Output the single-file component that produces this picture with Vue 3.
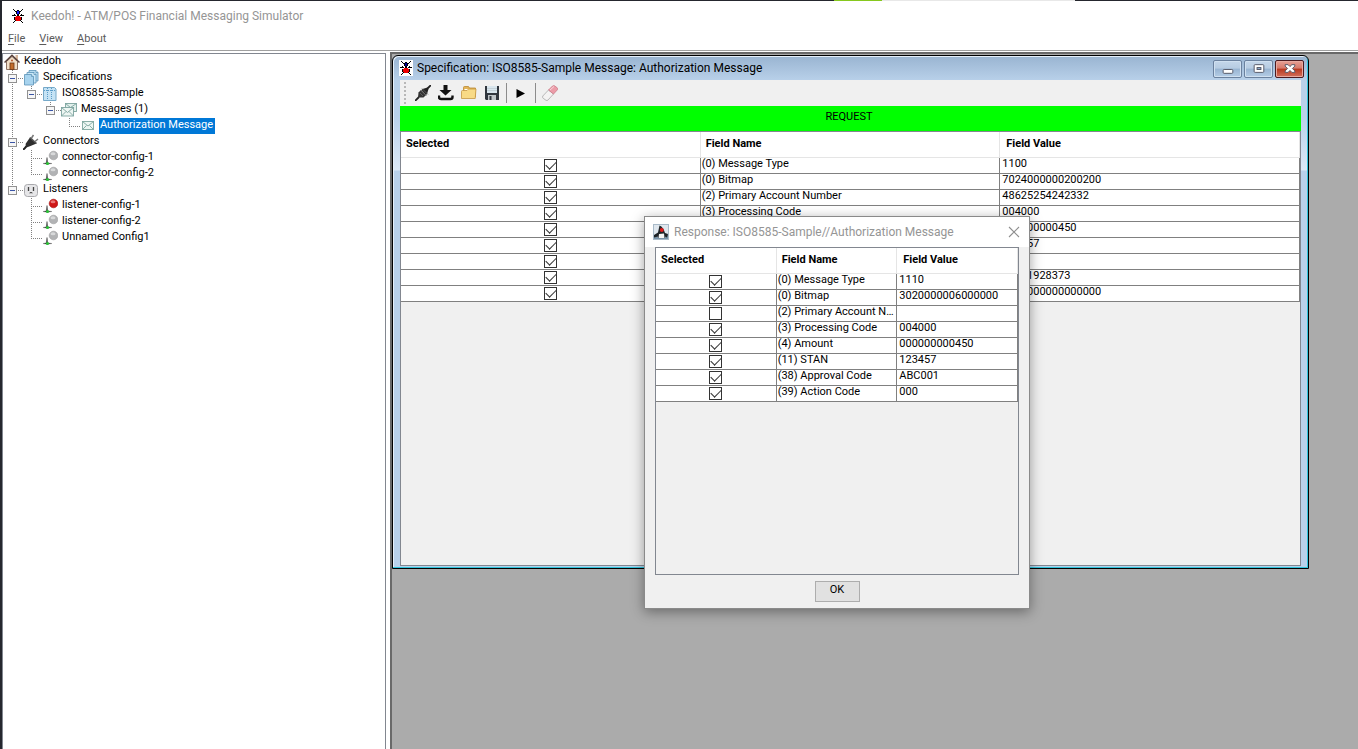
<script setup>
import { ref } from 'vue'

const menus = ['File', 'View', 'About']

const tree = [
  { label: 'Keedoh', icon: 'home', guides: [] },
  { label: 'Specifications', icon: 'specs', guides: ['tee'], open: true },
  { label: 'ISO8585-Sample', icon: 'spec', guides: ['bar', 'end'], open: true },
  { label: 'Messages (1)', icon: 'mails', guides: ['bar', 'blank', 'end'], open: true },
  { label: 'Authorization Message', icon: 'mail', guides: ['bar', 'blank', 'blank', 'end'], selected: true },
  { label: 'Connectors', icon: 'plug', guides: ['tee'], open: true },
  { label: 'connector-config-1', icon: 'idle', guides: ['bar', 'tee'] },
  { label: 'connector-config-2', icon: 'idle', guides: ['bar', 'end'] },
  { label: 'Listeners', icon: 'socket', guides: ['end'], open: true },
  { label: 'listener-config-1', icon: 'active', guides: ['blank', 'tee'] },
  { label: 'listener-config-2', icon: 'idle', guides: ['blank', 'tee'] },
  { label: 'Unnamed Config1', icon: 'idle', guides: ['blank', 'end'] }
]

const requestRows = ref([
  { name: '(0) Message Type', value: '1100', on: true },
  { name: '(0) Bitmap', value: '7024000000200200', on: true },
  { name: '(2) Primary Account Number', value: '48625254242332', on: true },
  { name: '(3) Processing Code', value: '004000', on: true },
  { name: '(4) Amount', value: '000000000450', on: true },
  { name: '(11) STAN', value: '123457', on: true },
  { name: '(22) POS Entry Mode', value: '', on: true },
  { name: '(41) Terminal ID', value: '00001928373', on: true },
  { name: '(52) PIN Data', value: '0000000000000000', on: true }
])

const responseRows = ref([
  { name: '(0) Message Type', value: '1110', on: true },
  { name: '(0) Bitmap', value: '3020000006000000', on: true },
  { name: '(2) Primary Account Number', value: '', on: false },
  { name: '(3) Processing Code', value: '004000', on: true },
  { name: '(4) Amount', value: '000000000450', on: true },
  { name: '(11) STAN', value: '123457', on: true },
  { name: '(38) Approval Code', value: 'ABC001', on: true },
  { name: '(39) Action Code', value: '000', on: true }
])
</script>

<template>
  <div class="screen">
    <div class="backdrop"><span class="backdrop-green"></span><span class="backdrop-light"></span></div>
    <div class="app">
      <header class="titlebar">
        <svg class="bug" viewBox="0 0 16 16" shape-rendering="crispEdges">
          <path d="M3 1h1v1h1v1h1v1h-1v-1h-1v-1h-1zM12 1h1v1h-1v1h-1v1h-1v-1h1v-1h1zM2 7h2v-1h1v1h1v1h-4zM14 7h-2v-1h-1v1h-1v1h4zM7 2h2v1h1v3h-1v2h-2v-2h-1v-3h1zM3 14h1v-1h1v-1h1v1h-1v1h-1v1h-1zM13 14h-1v-1h-1v-1h-1v1h1v1h1v1h1zM4 9h1v3h-1zM11 9h1v3h-1z" fill="#000" />
          <path d="M7 3h2v3h-2z" fill="#1414ff" />
          <path d="M6 8h4v1h1v3h-1v1h-4v-1h-1v-3h1z" fill="#f00000" />
        </svg>
        <h1>Keedoh! - ATM/POS Financial Messaging Simulator</h1>
      </header>
      <nav class="menubar">
        <button v-for="m in menus" :key="m" type="button"><u>{{ m[0] }}</u>{{ m.slice(1) }}</button>
      </nav>
      <div class="body">
        <aside class="tree-panel">
          <ul class="tree">
            <li v-for="n in tree" :key="n.label">
              <svg v-for="(g, i) in n.guides" :key="i" class="guide" viewBox="0 0 19 16" shape-rendering="crispEdges">
                <path v-if="g === 'bar' || g === 'tee'" d="M8.5 0V16" class="dots" />
                <path v-if="g === 'end'" d="M8.5 0V8" class="dots" />
                <path v-if="g === 'tee' || g === 'end'" d="M8 8.5H19" class="dots" />
                <g v-if="n.open && i === n.guides.length - 1">
                  <rect x="4.500" y="4.500" width="8" height="8" fill="#f6f6f6" stroke="#919191" />
                  <path d="M6 8.500H11" stroke="#3a55a5" />
                </g>
              </svg>
              <svg class="node-icon" viewBox="0 0 16 16">
                <g v-if="n.icon === 'home'">
                  <path d="M11.500 1H14v5h-2.500z" fill="#d8b79b" />
                  <path d="M2.500 7.500L8 2.500l5.500 5V15.500h-11z" fill="#f1dfc8" stroke="#8d7262" />
                  <path d="M.5 8.500L8 1.200l7.500 7.300" fill="none" stroke="#57403a" stroke-width="1.500" />
                  <rect x="6" y="9" width="4" height="6.500" fill="#c26d2c" stroke="#6b3512" stroke-width=".8" />
                  <circle cx="8" cy="6.500" r="1" fill="#b4562b" />
                </g>
                <g v-else-if="n.icon === 'specs'" stroke="#5a93b8" stroke-width=".8">
                  <path d="M6 .5h7l2 2v8.500H6z" fill="#b8ddf2" />
                  <path d="M4 2.500h7l2 2v8.500H4z" fill="#c9e7f7" />
                  <path d="M1.500 4.500h7l2 2v8.500h-9z" fill="#a7d3ee" />
                  <path d="M8.500 4.500v2h2M11 2.500v2h2M13 .5v2h2" fill="#edf8fd" />
                </g>
                <g v-else-if="n.icon === 'spec'">
                  <path d="M1.500 1.500h11l1.500 1.500v11.500H1.500z" fill="#c5e3f5" stroke="#76a9c9" />
                  <path d="M5.500 2v12M9.500 2v12M2 4.500h12" stroke="#5b9cc8" stroke-dasharray="1 1" />
                </g>
                <g v-else-if="n.icon === 'mails'" stroke="#7da49f" stroke-width=".9">
                  <rect x="4.500" y="1.500" width="11" height="8" fill="#e2f0ec" />
                  <rect x=".5" y="5.500" width="12" height="8.500" fill="#eef6f3" />
                  <path d="M.5 5.500l6 5 6-5M.5 14l4.500-4.500M12.500 14L8 9.500M4.500 1.500l5 4 6-4" fill="none" />
                </g>
                <g v-else-if="n.icon === 'mail'" stroke="#7fa79f" stroke-width=".9">
                  <rect x="2.500" y="3.500" width="11" height="8" fill="#edf6f3" />
                  <path d="M2.500 3.500l5.500 4.500 5.500-4.500M2.500 11.500l4-4M13.500 11.500l-4-4" fill="none" />
                </g>
                <g v-else-if="n.icon === 'plug'">
                  <path d="M0 15.500C2 15 2.500 13 4 11.500" fill="none" stroke="#222" stroke-width="2" />
                  <path d="M2.500 10L7 3.500l6.500 6-6 2.500-4 1.500z" fill="#2e2e2e" />
                  <path d="M7 3.500l6.500 6" stroke="#555" stroke-width="1.500" />
                  <path d="M8.500 4L10.500 1M12 7.500l3-2.500" stroke="#777" stroke-width="1.500" />
                </g>
                <g v-else-if="n.icon === 'socket'">
                  <rect x="1.500" y="2.500" width="13" height="12" rx="3" fill="#e6e6e8" stroke="#a9a9ad" />
                  <path d="M5.500 5v4M10.500 5v4" stroke="#444" stroke-width="1.300" />
                  <path d="M7 11.500v-1h2v1" fill="none" stroke="#555" />
                </g>
                <g v-else>
                  <path d="M5 7.500l.8 6h-1.600z" fill="#333" stroke="#444" stroke-width=".5" />
                  <path d="M1 13.500l4-.7 5 .7-5 .7z" fill="#333" stroke="#444" stroke-width=".3" />
                  <circle cx="5.500" cy="13.500" r="1.600" fill="#29c236" />
                  <circle cx="11.500" cy="5.500" r="4.300" :fill="n.icon === 'active' ? '#cf1717' : '#b2b3b5'" :stroke="n.icon === 'active' ? '#a51111' : '#9d9ea0'" stroke-width=".6" />
                  <ellipse cx="11" cy="3.700" rx="2.500" ry="1.500" :fill="n.icon === 'active' ? '#ea7777' : '#d8d9da'" />
                </g>
              </svg>
              <span class="node-label" :class="{ selected: n.selected }">{{ n.label }}</span>
            </li>
          </ul>
        </aside>
        <main class="desktop">
          <section class="frame">
            <header class="frame-title">
              <svg class="bug frame-bug" viewBox="1 0 14 16" shape-rendering="crispEdges">
                <path d="M3 1h1v1h1v1h1v1h-1v-1h-1v-1h-1zM12 1h1v1h-1v1h-1v1h-1v-1h1v-1h1zM2 7h2v-1h1v1h1v1h-4zM14 7h-2v-1h-1v1h-1v1h4zM7 2h2v1h1v3h-1v2h-2v-2h-1v-3h1zM3 14h1v-1h1v-1h1v1h-1v1h-1v1h-1zM13 14h-1v-1h-1v-1h-1v1h1v1h1v1h1zM4 9h1v3h-1zM11 9h1v3h-1z" fill="#000" />
                <path d="M7 3h2v3h-2z" fill="#00008b" />
                <path d="M6 8h4v1h1v3h-1v1h-4v-1h-1v-3h1z" fill="#f00000" />
              </svg>
              <h2>Specification: ISO8585-Sample Message: Authorization Message</h2>
              <div class="frame-buttons">
                <button type="button" aria-label="Minimize"><svg viewBox="0 0 28 16"><rect x="9.500" y="8.500" width="10" height="4" rx="1" fill="#fff" stroke="#535666" /></svg></button>
                <button type="button" aria-label="Maximize"><svg viewBox="0 0 28 16"><rect x="9.500" y="3.500" width="10" height="8" rx="1" fill="#fff" stroke="#535666" /><rect x="12.500" y="6.500" width="4" height="2" fill="#8fb0d0" stroke="#535666" /></svg></button>
                <button type="button" class="close" aria-label="Close"><svg viewBox="0 0 28 16"><path d="M9.500 3.500h3l2 2 2-2h3v1.500l-2.500 2.500 2.500 2.500v1.500h-3l-2-2-2 2h-3v-1.500l2.500-2.500-2.500-2.500z" fill="#fff" stroke="#535666" /></svg></button>
              </div>
            </header>
            <div class="frame-content">
              <div class="toolbar">
                <span class="grip"></span>
                <button type="button" aria-label="Connect"><svg viewBox="0 0 16 16"><path d="M0 16l4-4M12 4l4-4" stroke="#222" stroke-width="1.800" /><path d="M3 12.500l.5-5L6 5l5 5-2.500 2.500z" fill="#333" /><path d="M6.500 5l1-1 5-1.500L13.500 4 12 9l-1 1z" fill="#222" /><path d="M5.500 5l6 6M7 3.500l6 6M5 8l3 3" stroke="#666" stroke-width=".8" /></svg></button>
                <button type="button" aria-label="Import"><svg viewBox="0 0 16 16"><path d="M5.500 0h4v5h4L7.500 10.500 1.500 5h4z" fill="#111" /><path d="M1 10.500v1.500q0 2 2 2h9.500q2 0 2-2v-1.500" fill="none" stroke="#111" stroke-width="2.400" /></svg></button>
                <button type="button" aria-label="Open"><svg viewBox="0 0 16 16"><path d="M2.500 12V2.500q0-1 1-1h4l1 1.500h6V12z" fill="#e2b458" stroke="#b98832" stroke-width=".8" /><path d="M3.500 4h10v7h-10z" fill="#fff" /><path d="M.5 13.500V6.500q0-1 1-1h4.500l1.500-1.500h7.500l-.8 9.500z" fill="#f8da86" stroke="#c59742" stroke-width=".8" /></svg></button>
                <button type="button" aria-label="Save"><svg viewBox="0 0 16 16"><path d="M1 1h14v14H2l-1-1z" fill="#30363e" /><rect x="3" y="1" width="10" height="7" fill="#d9e6ee" /><path d="M3 3.500h10M3 5.500h10" stroke="#b4c2cb" stroke-width=".6" /><rect x="4" y="10" width="8" height="5" fill="#bfc5c9" /><rect x="5.500" y="11" width="2" height="4" fill="#30363e" /></svg></button>
                <span class="divider"></span>
                <button type="button" aria-label="Send"><svg viewBox="0 0 16 16"><path d="M3.500 4l8.500 4.500L3.500 13z" fill="#000" /></svg></button>
                <span class="divider"></span>
                <button type="button" aria-label="Clear"><svg viewBox="0 0 16 16"><path d="M.8 11L6.500 5l5 4-5.500 6q-1 1-2 .3l-2.800-2q-1.200-1-.4-2.300z" fill="#f4f3f3" stroke="#aaa" stroke-width=".8" /><path d="M6.500 5l4-4q1-.8 2-.2l2.700 2q.9 1 .2 2L11.500 9z" fill="#ec9ca8" stroke="#cb7c8a" stroke-width=".8" /><path d="M8 5l4-3.500" stroke="#fbd5da" /></svg></button>
              </div>
              <div class="banner">REQUEST</div>
              <div class="grid-pane">
                <table>
                  <thead><tr><th>Selected</th><th>Field Name</th><th>Field Value</th></tr></thead>
                  <tbody>
                    <tr v-for="r in requestRows" :key="r.name">
                      <td class="tick"><input v-model="r.on" type="checkbox" :aria-label="r.name" /></td>
                      <td>{{ r.name }}</td>
                      <td>{{ r.value }}</td>
                    </tr>
                  </tbody>
                </table>
              </div>
            </div>
          </section>

          <section class="dialog" role="dialog" aria-labelledby="response-title">
            <header class="dialog-title">
              <svg class="duke" viewBox="0 0 16 16">
                <rect x=".5" y=".5" width="15" height="15" fill="#dfe7ee" stroke="#a9bac8" />
                <path d="M1 11h14v4H1z" fill="#7894a9" />
                <path d="M6.500 1.500q4 1.500 5.500 7.500l3 1-1 3.500-2-1v1.500H5v-1.500L1 13.500V11l4-2.500z" fill="#1f2428" />
                <path d="M6 10l5-.5.5 4.500H5.500z" fill="#f5f5f5" />
                <circle cx="8.800" cy="6" r="2" fill="#e01b1b" />
              </svg>
              <h2 id="response-title">Response: ISO8585-Sample//Authorization Message</h2>
              <button type="button" aria-label="Close dialog"><svg viewBox="0 0 12 12"><path d="M1 1l10 10M11 1L1 11" stroke="#8f8f8f" stroke-width="1.100" /></svg></button>
            </header>
            <div class="dialog-body">
              <div class="grid-pane">
                <table>
                  <thead><tr><th>Selected</th><th>Field Name</th><th>Field Value</th></tr></thead>
                  <tbody>
                    <tr v-for="r in responseRows" :key="r.name">
                      <td class="tick"><input v-model="r.on" type="checkbox" :aria-label="r.name" /></td>
                      <td>{{ r.name }}</td>
                      <td>{{ r.value }}</td>
                    </tr>
                  </tbody>
                </table>
              </div>
              <button type="button" class="ok">OK</button>
            </div>
          </section>
        </main>
      </div>
    </div>
  </div>
</template>

<style>
body { margin: 0; background: #fff; }
</style>

<style scoped>
* { box-sizing: border-box; }
.screen {
  height: 100vh;
  display: flex;
  flex-direction: column;
  overflow: hidden;
  background: #25272e;
  font-family: Roboto, "Open Sans", sans-serif;
  font-size: 11px;
  line-height: 12px;
  color: #000;
}
button { font: inherit; color: inherit; padding: 0; border: 0; background: none; }
h1, h2 { margin: 0; font-size: 12px; font-weight: 400; line-height: 16px; white-space: nowrap; }
svg { display: block; flex: none; }

.backdrop { height: 1px; display: flex; justify-content: flex-end; }
.backdrop-green { width: 48px; background: #86c81e; }
.backdrop-light { width: 193px; margin-right: 283px; background: #e8e8e8; }
.app { flex: 1; min-height: 0; margin-left: 2px; display: flex; flex-direction: column; background: #fff; }

.titlebar { height: 29px; display: flex; align-items: center; gap: 5px; padding-left: 8px; color: #959595; }
.bug { width: 16px; height: 16px; }
.menubar { height: 20px; display: flex; gap: 14px; padding: 2px 6px 0; color: #5a5a5a; }
.menubar button { height: 14px; }
.menubar u { text-underline-offset: 2px; }

.body { flex: 1; min-height: 0; display: flex; border-top: 1px solid #a0a0a0; }
.tree-panel {
  width: 384px;
  flex: none;
  margin-top: 2px;
  background: #fff;
  border: 1px solid #828790;
  border-width: 1px 1px 0 1px;
}
.tree { list-style: none; margin: 0; padding: 0 0 0 1px; }
.tree li { height: 16px; display: flex; }
.guide { width: 19px; height: 16px; }
.dots { fill: none; stroke: #808080; stroke-dasharray: 1 1; }
.node-icon { width: 16px; height: 16px; margin-right: 3px; }
.node-label { height: 16px; padding: 0 2px 0 1px; line-height: 14px; white-space: nowrap; }
.selected { background: #0078d7; color: #fff; }

.desktop {
  flex: 1;
  min-width: 0;
  position: relative;
  margin: 1px 0 0 4px;
  background: #ababab;
  border: 2px solid #696969;
  border-width: 2px 0 0 2px;
}
.frame {
  position: absolute;
  inset: 1px 49px 180px 0;
  display: flex;
  flex-direction: column;
  padding: 0 7px 2px 6px;
  border: 1px solid #000;
  border-radius: 6px 6px 0 0;
  box-shadow: inset -1px -1px #2fc4dc, inset 1px 1px #e6f0fa;
  background: linear-gradient(#99b4d1, #b9d1ea 25px, #b9d1ea 60px, #dce9f7 114px, #b9d1ea 115px);
}
.frame-title { height: 24px; flex: none; display: flex; align-items: center; gap: 4px; }
.frame-bug { width: 14px; background: #fff; }
.frame-title h2 { flex: 1; min-width: 0; }
.frame-buttons { display: flex; gap: 2px; margin: 1px -3px 0 0; }
.frame-buttons button {
  width: 29px;
  height: 18px;
  border: 1px solid #6b819e;
  border-radius: 2px;
  background: linear-gradient(#c5d7ea, #b7cce2 45%, #98b4d2 50%, #b4cde6);
  box-shadow: inset 0 0 0 1px #d0e0f0;
}
.frame-buttons button svg { width: 27px; height: 16px; }
.frame-buttons .close {
  border-color: #4a1a20;
  background: linear-gradient(#e6a195, #d6796b 45%, #b8381f 50%, #d2705c);
  box-shadow: inset 0 0 0 1px #e7a99f;
}
.frame-content { flex: 1; min-height: 0; display: flex; flex-direction: column; margin-left: 1px; background: #f0f0f0; }
.toolbar { height: 26px; flex: none; display: flex; align-items: center; gap: 7px; padding-left: 4px; }
.toolbar button svg { width: 16px; height: 16px; }
.grip { width: 2px; height: 22px; margin-right: 2px; background: repeating-linear-gradient(#b8b8b8 0 2px, transparent 2px 4px); }
.divider { width: 1px; height: 20px; margin: 0 -1px; background: #8c8c8c; }
.banner { height: 25px; flex: none; padding: 4px 3px 0 0; text-align: center; line-height: 14px; background: #0f0; }

.grid-pane { flex: 1; min-height: 0; border: 1px solid #828790; background: #f0f0f0; }
table { width: 100%; table-layout: fixed; border-collapse: separate; border-spacing: 0; background: #fff; }
th { height: 26px; padding: 0 5px 2px; text-align: left; font-weight: 700; line-height: 13px; border: 1px solid #e5e5e5; border-width: 0 1px 1px 0; }
th:last-child { padding-left: 6px; }
td {
  height: 16px;
  padding: 0 1px;
  vertical-align: top;
  white-space: nowrap;
  overflow: hidden;
  text-overflow: ellipsis;
  border: 1px solid #808080;
  border-width: 0 1px 1px 0;
}
td:last-child { padding-left: 2px; }
.tick { padding: 1px 0 0; }
.tick input {
  appearance: none;
  display: block;
  position: relative;
  width: 13px;
  height: 13px;
  margin: 0 auto;
  border: 1px solid #333;
  background: #fff;
}
.tick input:checked::after {
  content: "";
  position: absolute;
  left: 1px;
  top: 1px;
  width: 9px;
  height: 5px;
  border: 1px solid #333;
  border-width: 0 0 1px 1px;
  transform: rotate(-45deg);
}

.dialog {
  position: absolute;
  left: 252px;
  top: 162px;
  width: 386px;
  height: 393px;
  display: flex;
  flex-direction: column;
  border: 1px solid #8a8a8a;
  background: #f0f0f0;
  box-shadow: 0 3px 12px rgba(0, 0, 0, .38);
}
.dialog-title { height: 30px; flex: none; display: flex; align-items: center; gap: 5px; padding: 0 9px 0 8px; background: #fff; color: #959595; }
.dialog-title h2 { flex: 1; min-width: 0; }
.dialog-title button svg { width: 12px; height: 12px; }
.duke { width: 16px; height: 16px; }
.dialog-body { flex: 1; min-height: 0; display: flex; flex-direction: column; align-items: center; gap: 6px; padding: 0 10px 6px; }
.dialog-body .grid-pane { width: 100%; }
.ok { width: 45px; height: 21px; flex: none; padding-bottom: 3px; border: 1px solid #adadad; background: #e1e1e1; }
</style>
